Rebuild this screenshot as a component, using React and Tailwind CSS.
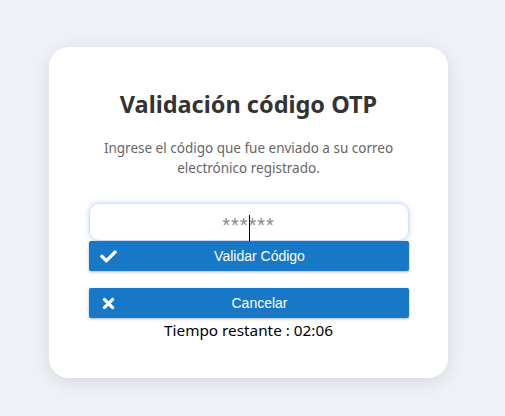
import React from "react";
import { FaCheck, FaTimes } from "react-icons/fa";

export default function App(){
  return (
    <div className="w-[505px] h-[416px] bg-[#eef2f8] pt-[47px] pl-[49px]" style={{fontFamily:'"Noto Sans", sans-serif'}}>
      <div className="w-[399px] h-[331px] bg-white rounded-[20px] shadow-[0_4px_18px_rgba(0,0,0,0.10)] flex flex-col items-center pt-[42px]">
        <h1 className="text-[23.5px] font-bold text-[#333] leading-[30px]">Validación código OTP</h1>
        <p className="mt-[19px] text-[13.5px] text-[#666] leading-[20px] text-center w-[320px]">
          Ingrese el código que fue enviado a su correo electrónico registrado.
        </p>
        <div className="mt-[25px] w-[320px] relative">
          <div className="h-[38px] rounded-[10px] border border-[#cfe3fb] shadow-[0_0_5px_rgba(100,160,240,0.45)] flex items-center justify-center">
            <span className="text-[20px] text-[#888] tracking-[1px] pt-[5px]" style={{fontFamily:'"Liberation Sans", sans-serif'}}>******</span>
          </div>
          <div className="absolute left-[160px] top-[12px] w-px h-[26px] bg-black"></div>
          <Btn icon={<FaCheck className="text-[17px]" />} label="Validar Código" />
          <div className="h-[17px]"></div>
          <Btn icon={<FaTimes className="text-[17px]" />} label="Cancelar" />
        </div>
        <div className="mt-[1px] text-[15.3px] text-black leading-[22px]">Tiempo restante : 02:06</div>
      </div>
    </div>
  );
}

function Btn({icon, label}){
  return (
    <div className="h-[30px] bg-[#1778c8] rounded-[2px] shadow-[0_1px_3px_rgba(0,0,0,0.3)] flex items-center text-white relative pl-[22px]">
      <span className="absolute left-[11px] top-[7px]">{icon}</span>
      <span className="flex-1 text-center text-[14px]" style={{fontFamily:'"Liberation Sans", sans-serif'}}>{label}</span>
    </div>
  );
}
